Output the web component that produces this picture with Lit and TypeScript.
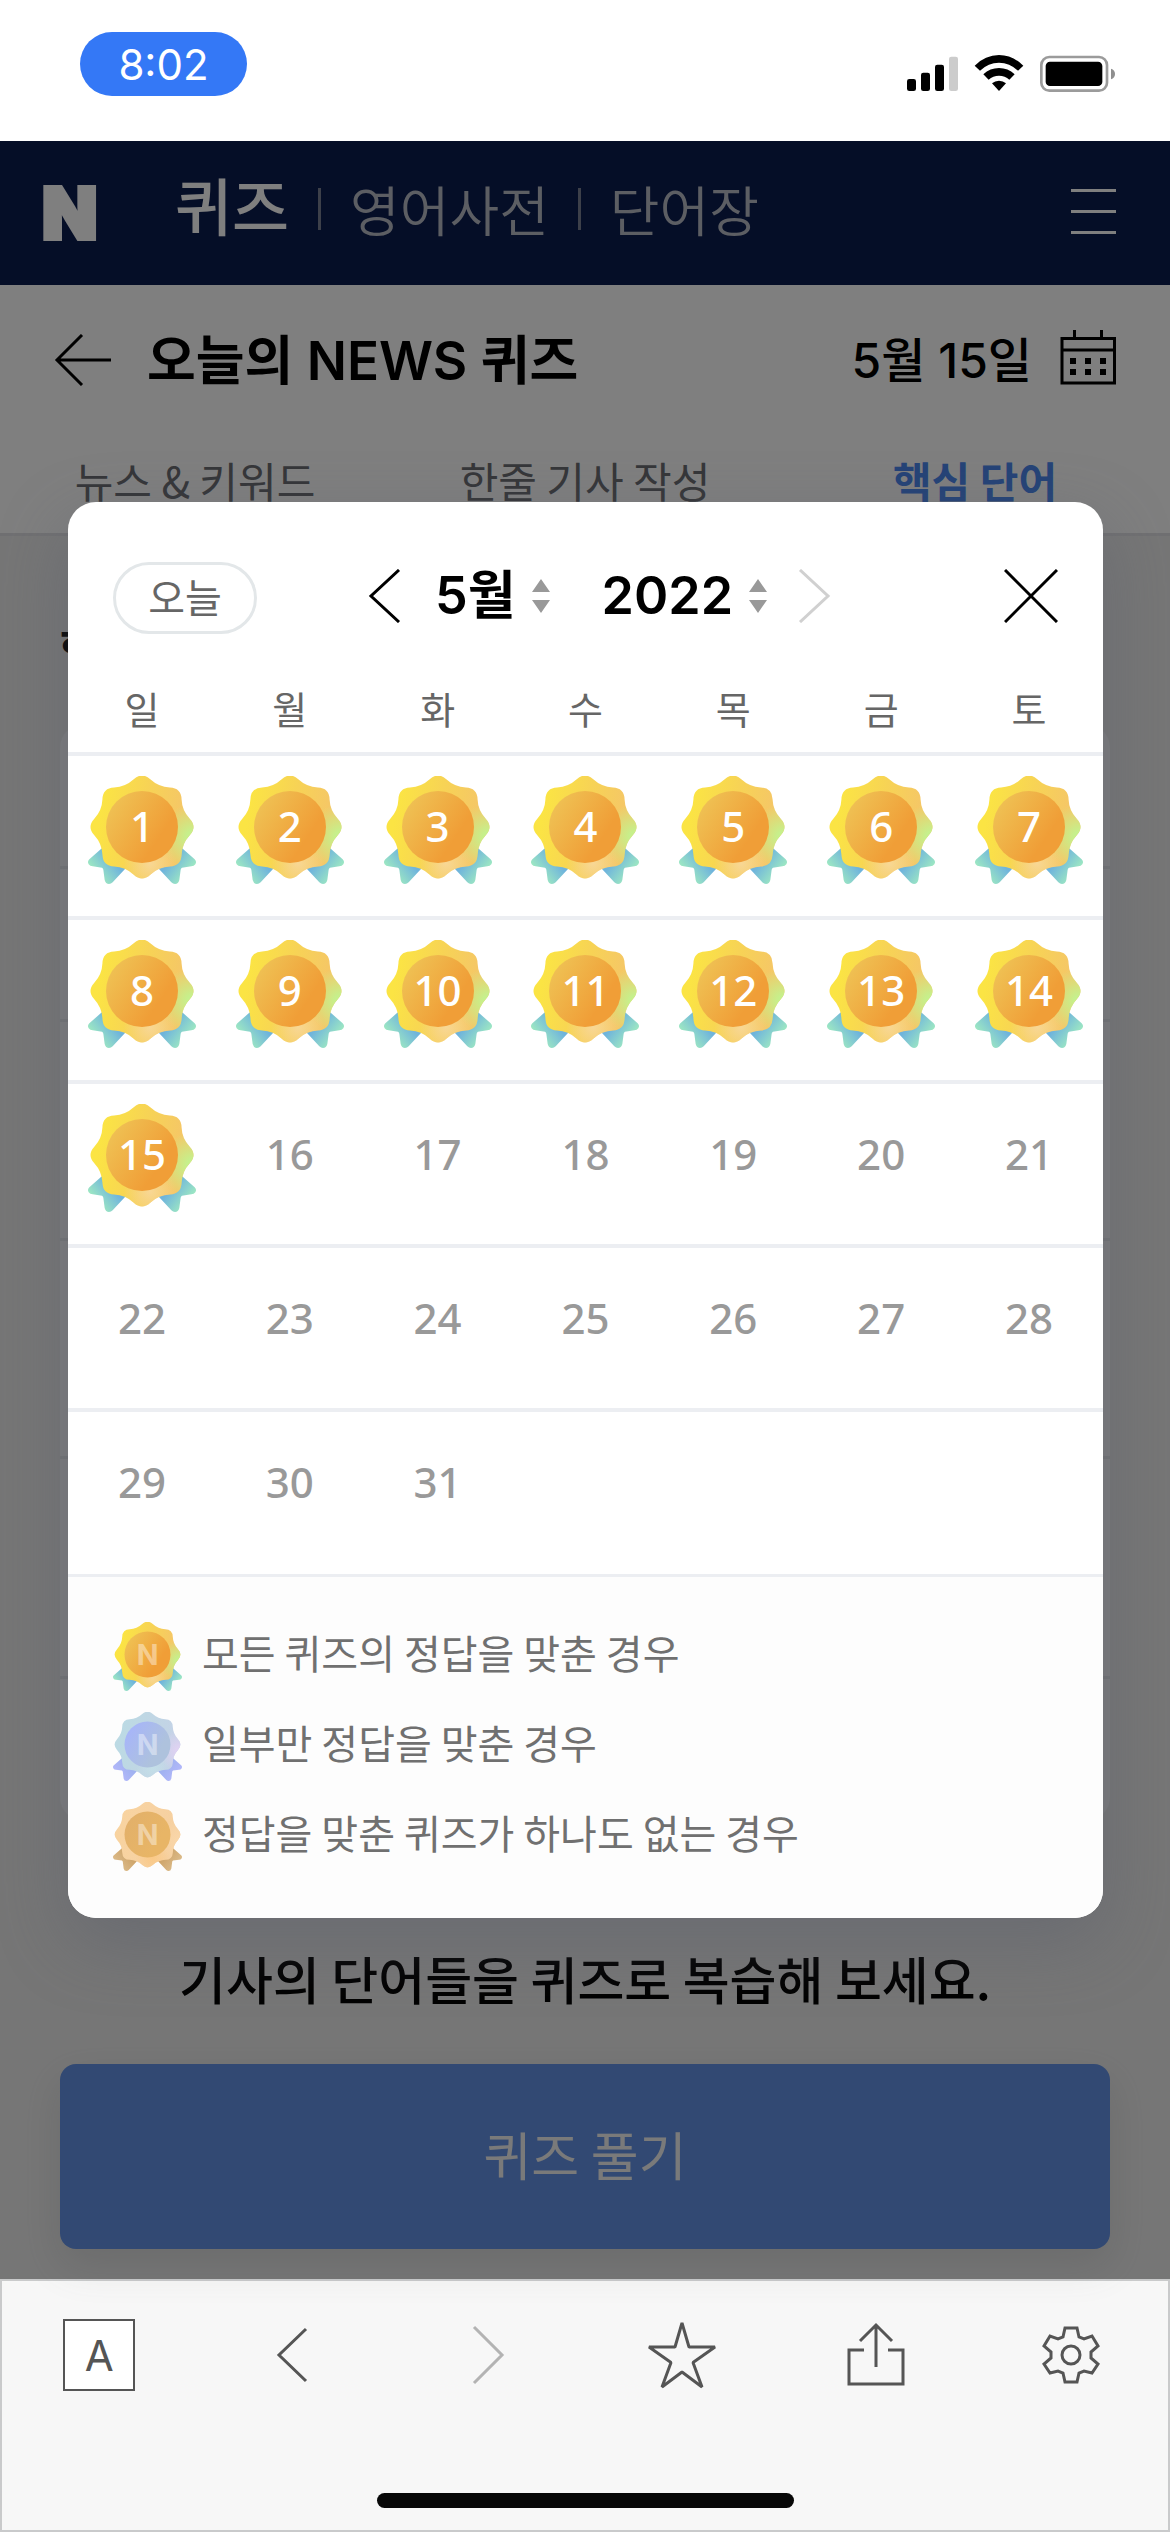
import { LitElement, html, css, svg, nothing } from "lit";
import { customElement, property, state } from "lit/decorators.js";
import { classMap } from "lit/directives/class-map.js";

type Grade = "gold" | "silver" | "bronze";

interface Palette {
  body: [string, string, string];
  glow: string;
  foot: string;
  disc: [string, string];
  ribbon: [string, string];
}

const PALETTES: Record<Grade, Palette> = {
  gold: {
    body: ["#fbe444", "#f7d355", "#f5c766"],
    glow: "#c6f08c",
    foot: "#f8d795",
    disc: ["#efc355", "#f09e37"],
    ribbon: ["#6fb4dc", "#a2edc0"],
  },
  silver: {
    body: ["#bcdae4", "#c0d6e4", "#c3d3e6"],
    glow: "#dfd2f2",
    foot: "#c4dfe8",
    disc: ["#a6b4fb", "#aec2dd"],
    ribbon: ["#a0b2f0", "#b4b8fb"],
  },
  bronze: {
    body: ["#f8d3a0", "#f7d2a2", "#f6d0a0"],
    glow: "#f9d6a8",
    foot: "#fac987",
    disc: ["#e2b06a", "#e8b566"],
    ribbon: ["#cfa66c", "#dcbc8c"],
  },
};

/* Eight-lobed rosette: quadratic curves between the midpoints of a star's edges. */
function rosette(cx: number, cy: number, tip: number, valley: number): string {
  const points = Array.from({ length: 16 }, (_, i) => {
    const radius = i % 2 === 0 ? tip : valley;
    const angle = (i * Math.PI) / 8;
    return [cx + radius * Math.sin(angle), cy - radius * Math.cos(angle)];
  });
  const mid = (a: number[], b: number[]) =>
    `${((a[0] + b[0]) / 2).toFixed(1)} ${((a[1] + b[1]) / 2).toFixed(1)}`;
  let d = `M${mid(points[15], points[0])}`;
  points.forEach((p, i) => {
    d += `Q${p[0].toFixed(1)} ${p[1].toFixed(1)} ${mid(p, points[(i + 1) % 16])}`;
  });
  return d + "Z";
}

const ROSETTE = rosette(162, 153, 166, 130);

@customElement("quiz-badge")
export class QuizBadge extends LitElement {
  @property() grade: Grade = "gold";
  @property() mark = "";

  static styles = css`
    :host {
      display: block;
    }
    .art {
      display: block;
      width: 100%;
      height: 100%;
    }
    .mark {
      font-family: Inter, "Liberation Sans", sans-serif;
      font-size: 134px;
      font-weight: 700;
      fill: #ffffff;
      fill-opacity: 0.42;
    }
  `;

  render() {
    const p = PALETTES[this.grade];
    return html`
      <svg class="art" viewBox="0 0 324 324" aria-hidden="true">
        <defs>
          <linearGradient id="body" x1="0" y1="0.3" x2="1" y2="0.5">
            <stop offset="0.1" stop-color=${p.body[0]} />
            <stop offset="0.5" stop-color=${p.body[1]} />
            <stop offset="0.85" stop-color=${p.body[2]} />
          </linearGradient>
          <radialGradient id="glow" gradientUnits="userSpaceOnUse" cx="312" cy="182" r="98">
            <stop offset="0.15" stop-color=${p.glow} />
            <stop offset="1" stop-color=${p.glow} stop-opacity="0" />
          </radialGradient>
          <radialGradient id="foot" gradientUnits="userSpaceOnUse" cx="186" cy="262" r="80">
            <stop offset="0" stop-color=${p.foot} />
            <stop offset="1" stop-color=${p.foot} stop-opacity="0" />
          </radialGradient>
          <linearGradient id="disc" x1="0" y1="0.2" x2="0.9" y2="0.8">
            <stop offset="0" stop-color=${p.disc[0]} />
            <stop offset="0.8" stop-color=${p.disc[1]} />
          </linearGradient>
          <linearGradient id="ribbon" gradientUnits="userSpaceOnUse" x1="84" y1="250" x2="20" y2="300">
            <stop offset="0.1" stop-color=${p.ribbon[0]} />
            <stop offset="1" stop-color=${p.ribbon[1]} />
          </linearGradient>
        </defs>
        <g fill="url(#ribbon)">
          <path
            d="M60 200L39 219L4 250Q-3 257 2 265Q6 271 14 271L42 275Q45 276 46 281L50 312Q53 324 63 324Q69 324 74 319L111 279L120 240Z"
          />
        </g>
        <g fill="url(#ribbon)" transform="translate(324 0) scale(-1 1)">
          <path
            d="M60 200L39 219L4 250Q-3 257 2 265Q6 271 14 271L42 275Q45 276 46 281L50 312Q53 324 63 324Q69 324 74 319L111 279L120 240Z"
          />
        </g>
        <path d=${ROSETTE} fill="url(#body)" />
        <path d=${ROSETTE} fill="url(#foot)" />
        <path d=${ROSETTE} fill="url(#glow)" />
        <circle cx="162" cy="153" r="108" fill="url(#disc)" />
        ${this.mark
          ? svg`<text class="mark" x="162" y="202" text-anchor="middle">${this.mark}</text>`
          : nothing}
      </svg>
    `;
  }
}

const WEEKDAYS = ["일", "월", "화", "수", "목", "금", "토"];
const TABS = ["뉴스 & 키워드", "한줄 기사 작성", "핵심 단어"];
const LEGEND: { grade: Grade; label: string }[] = [
  { grade: "gold", label: "모든 퀴즈의 정답을 맞춘 경우" },
  { grade: "silver", label: "일부만 정답을 맞춘 경우" },
  { grade: "bronze", label: "정답을 맞춘 퀴즈가 하나도 없는 경우" },
];
const LAST_SOLVED = 15;

const stepper = html`
  <svg class="stepper" viewBox="0 0 18 34" aria-hidden="true">
    <path d="M9 0L18 13H0Z M0 21H18L9 34Z" fill="#999999" />
  </svg>
`;

@customElement("app-root")
export class AppRoot extends LitElement {
  @state() private month = 5;
  @state() private year = 2022;

  static styles = css`
    :host {
      --kr: "Noto Sans CJK KR", sans-serif;
      --mixed: Inter, "Noto Sans CJK KR", sans-serif;
      display: flex;
      flex-direction: column;
      min-height: 100vh;
      box-sizing: border-box;
      background: #ffffff;
      font-family: var(--kr);
      color: #000000;
    }
    *,
    *::before {
      box-sizing: border-box;
    }
    svg {
      display: block;
      flex: none;
    }
    button,
    select {
      margin: 0;
      padding: 0;
      border: 0;
      background: none;
      color: inherit;
      font: inherit;
    }
    a {
      color: inherit;
      text-decoration: none;
    }
    h1,
    h2,
    p,
    ul {
      margin: 0;
      padding: 0;
      font-size: inherit;
      font-weight: inherit;
      list-style: none;
    }

    .status {
      display: flex;
      justify-content: space-between;
      align-items: flex-start;
      height: 141px;
      padding: 32px 54px 0 80px;
    }
    .clock {
      display: grid;
      place-items: center;
      width: 167px;
      height: 64px;
      border-radius: 32px;
      background: #3478f6;
      color: #ffffff;
      font-family: Inter, sans-serif;
      font-size: 42px;
    }
    .signals {
      width: 210px;
      height: 38px;
      margin-top: 22px;
    }

    .stage {
      position: relative;
      display: flex;
      flex-direction: column;
      flex: 1;
    }
    .gnb {
      display: flex;
      align-items: center;
      height: 144px;
      padding: 0 54px 0 42px;
      background: #0b1c4e;
      color: #ffffff;
    }
    .logo {
      width: 133px;
      font-family: Inter, sans-serif;
      font-size: 72px;
      font-weight: 900;
      line-height: 76px;
      -webkit-text-stroke: 4px #ffffff;
    }
    .gnb-links {
      display: flex;
      align-items: center;
      gap: 29px;
      flex: 1;
      padding-bottom: 8px;
      font-size: 54px;
      line-height: 72px;
      font-weight: 350;
      color: #b9bcc6;
    }
    .gnb-links .current {
      padding-bottom: 10px;
      font-size: 62px;
      font-weight: 500;
      color: #ffffff;
    }
    .bar {
      width: 3px;
      height: 42px;
      background: #7b8194;
    }
    .menu {
      padding-bottom: 4px;
    }
    .menu-icon {
      width: 45px;
      height: 45px;
    }

    .titlebar {
      display: flex;
      align-items: center;
      height: 150px;
      padding: 0 54px;
      background: #ffffff;
      font-family: var(--mixed);
    }
    .back-icon {
      width: 58px;
      height: 52px;
    }
    .title {
      flex: 1;
      padding: 0 0 6px 35px;
      font-size: 53px;
      font-weight: 600;
    }
    .date {
      display: flex;
      align-items: center;
      gap: 28px;
      padding-bottom: 6px;
      font-size: 48px;
      font-weight: 500;
    }
    .calendar-icon {
      width: 56px;
      height: 56px;
    }
    .tabs {
      display: grid;
      grid-template-columns: repeat(3, 1fr);
      height: 101px;
      border-bottom: 3px solid #e0e1e5;
      background: #ffffff;
      font-size: 42px;
      line-height: 60px;
      padding-top: 15px;
      color: #6a6c72;
      text-align: center;
    }
    .tabs .current {
      color: #4a86ee;
      font-weight: 700;
    }

    .lesson {
      display: flex;
      flex-direction: column;
      flex: 1;
      padding: 76px 60px 30px;
      background: #ededed;
    }
    .lesson-title {
      height: 112px;
      font-size: 46px;
      line-height: 68px;
      font-weight: 700;
    }
    .words {
      display: grid;
      grid-template-rows: 142fr 153fr 219fr 219fr 220fr 145fr;
      flex: 1;
      border-radius: 24px;
      background: #f8f8fa;
    }
    .words li + li {
      border-top: 3px solid #e6e8ec;
    }
    .hint {
      padding: 118px 0 47px;
      text-align: center;
      font-size: 51px;
      line-height: 78px;
      font-weight: 500;
    }
    .solve {
      height: 185px;
      padding-bottom: 6px;
      border-radius: 16px;
      background: #6493e6;
      box-shadow: 0 16px 40px rgba(100, 104, 115, 0.16);
      color: #f4f4f4;
      font-size: 52px;
      line-height: 76px;
    }

    .backdrop {
      position: absolute;
      inset: 0;
      display: grid;
      align-content: center;
      padding: 0 67px 0 68px;
      background: rgba(0, 0, 0, 0.5);
    }
    .dialog {
      overflow: hidden;
      border-radius: 28px;
      background: #ffffff;
    }
    .dialog-shadow {
      border-radius: 28px;
      box-shadow: 0 24px 68px rgba(88, 92, 108, 0.42);
    }
    .dialog-head {
      display: flex;
      align-items: center;
      padding: 58px 45px 32px;
    }
    .today {
      width: 144px;
      height: 72px;
      padding-bottom: 4px;
      border: 3px solid #e3e7e9;
      border-radius: 36px;
      color: #666666;
      font-size: 40px;
      line-height: 60px;
    }
    .period {
      display: flex;
      align-items: center;
      margin-left: 110px;
      padding-bottom: 4px;
    }
    .chevron {
      width: 34px;
      height: 54px;
    }
    .picker {
      position: relative;
      display: flex;
      align-items: center;
    }
    .picker select {
      appearance: none;
      field-sizing: content;
      height: 72px;
      font-family: var(--mixed);
      font-size: 52px;
      font-weight: 600;
      line-height: 72px;
    }
    .picker.month {
      margin: 0 52px 0 34px;
    }
    .picker.year {
      margin-right: 31px;
    }
    .picker.month select {
      min-width: 110px;
      padding-right: 34px;
    }
    .picker.year select {
      min-width: 164px;
      padding-right: 34px;
    }
    .stepper {
      position: absolute;
      right: 0;
      width: 18px;
      height: 34px;
      pointer-events: none;
    }
    .close {
      margin-left: auto;
      padding-bottom: 4px;
    }
    .close-icon {
      width: 54px;
      height: 54px;
    }

    .month-table {
      width: 100%;
      border-collapse: collapse;
      table-layout: fixed;
    }
    .month-table th {
      height: 86px;
      padding: 0 0 4px;
      color: #666666;
      font-size: 38px;
      font-weight: 400;
      line-height: 56px;
    }
    .month-table td {
      height: 164px;
      padding: 20px 0 0;
      border-top: 4px solid #eceef2;
      vertical-align: top;
    }
    .day {
      position: relative;
      display: grid;
      place-items: center;
      width: 108px;
      height: 108px;
      margin: 0 auto;
      padding-bottom: 10px;
      color: #999999;
      font-family: "Noto Sans", sans-serif;
      font-size: 42px;
      font-weight: 500;
    }
    .day.solved {
      color: #ffffff;
    }
    .day quiz-badge {
      position: absolute;
      inset: 0;
    }
    .day-number {
      position: relative;
    }

    .legend {
      display: flex;
      flex-direction: column;
      gap: 21px;
      padding: 45px 45px 47px;
      border-top: 3px solid #eceef2;
      background: #fdfdfd;
      color: #707070;
      font-size: 40px;
      line-height: 60px;
    }
    .legend-item {
      display: flex;
      align-items: center;
      gap: 20px;
      height: 69px;
    }
    .legend quiz-badge {
      width: 69px;
      height: 69px;
    }
    .legend-text {
      padding-bottom: 10px;
    }

    .toolbar {
      display: flex;
      flex-direction: column;
      justify-content: space-between;
      align-items: center;
      height: 253px;
      padding-bottom: 22px;
      border: 2px solid #c9cacb;
      background: #f7f7f7;
      color: #555555;
    }
    .tools {
      display: grid;
      grid-template-columns: repeat(6, 1fr);
      justify-items: center;
      align-items: center;
      width: 100%;
      padding-top: 38px;
    }
    .tool {
      display: grid;
      place-items: center;
      width: 72px;
      height: 72px;
    }
    .tool.home {
      border: 2px solid #555555;
      background: #ffffff;
      font-family: Inter, sans-serif;
      font-size: 42px;
    }
    .tool svg {
      width: 72px;
      height: 72px;
    }
    .tool.off {
      color: #b3b3b3;
    }
    .handle {
      width: 417px;
      height: 15px;
      border-radius: 8px;
      background: #080808;
    }
  `;

  private setMonth(e: Event) {
    this.month = Number((e.target as HTMLSelectElement).value);
  }

  private setYear(e: Event) {
    this.year = Number((e.target as HTMLSelectElement).value);
  }

  private weeks(): (number | null)[][] {
    const offset = new Date(this.year, this.month - 1, 1).getDay();
    const count = new Date(this.year, this.month, 0).getDate();
    const rows = Math.ceil((offset + count) / 7);
    return Array.from({ length: rows }, (_, r) =>
      Array.from({ length: 7 }, (_, c) => {
        const day = r * 7 + c - offset + 1;
        return day >= 1 && day <= count ? day : null;
      }),
    );
  }

  private renderDay(day: number | null) {
    if (day === null) return html`<td></td>`;
    const solved = this.year === 2022 && this.month === 5 && day <= LAST_SOLVED;
    return html`
      <td>
        <button class=${classMap({ day: true, solved })}>
          ${solved ? html`<quiz-badge grade="gold"></quiz-badge>` : nothing}
          <span class="day-number">${day}</span>
        </button>
      </td>
    `;
  }

  private renderStatus() {
    return html`
      <div class="status">
        <span class="clock">8:02</span>
        <svg class="signals" viewBox="48 42 630 114" aria-hidden="true">
          <rect x="51" y="117" width="27" height="36" rx="7" />
          <rect x="93" y="98" width="27" height="55" rx="7" />
          <rect x="135" y="74" width="27" height="79" rx="7" />
          <rect x="177" y="50" width="27" height="103" rx="7" fill="#cccccc" />
          <path d="M254 77Q286 45 327 45T400 77L384 92Q359 68 327 68T270 92Z" />
          <path d="M280 103Q300 84 327 84T374 103L358 119Q345 107 327 107T296 119Z" />
          <path d="M306 130Q315 122 327 122T348 130L327 153Z" />
          <rect x="454" y="51" width="197" height="101" rx="24" fill="none" stroke="#9b9b9b" stroke-width="8" />
          <rect x="467" y="65" width="170" height="73" rx="13" />
          <path d="M663 86Q675 90 675 102T663 118Z" fill="#8f8f8f" />
        </svg>
      </div>
    `;
  }

  private renderPage() {
    return html`
      <header class="gnb">
        <a class="logo" href="#">N</a>
        <nav class="gnb-links">
          <a class="current" href="#quiz">퀴즈</a>
          <span class="bar"></span>
          <a href="#dictionary">영어사전</a>
          <span class="bar"></span>
          <a href="#wordbook">단어장</a>
        </nav>
        <button class="menu" aria-label="메뉴">
          <svg class="menu-icon" viewBox="0 0 45 45" fill="#ffffff">
            <rect width="45" height="3" />
            <rect y="21" width="45" height="3" />
            <rect y="42" width="45" height="3" />
          </svg>
        </button>
      </header>

      <div class="titlebar">
        <button aria-label="뒤로">
          <svg class="back-icon" viewBox="0 0 58 52" fill="none" stroke="#000000" stroke-width="3">
            <path d="M28 1L3 26L28 51M3 26H57" />
          </svg>
        </button>
        <h1 class="title">오늘의 NEWS 퀴즈</h1>
        <button class="date">
          5월 15일
          <svg class="calendar-icon" viewBox="0 0 56 56" aria-hidden="true">
            <path
              d="M2 9.500H54.500V54H2ZM2 21H54.500M14.500 1V9M41.500 1V9"
              fill="none"
              stroke="#000000"
              stroke-width="3"
            />
            <path
              d="M10 29h6v6h-6zM25 29h6v6h-6zM40 29h6v6h-6zM10 40h6v6h-6zM25 40h6v6h-6zM40 40h6v6h-6z"
            />
          </svg>
        </button>
      </div>

      <nav class="tabs">
        ${TABS.map(
          (tab, i) => html`<a class=${classMap({ current: i === 2 })} href="#tab-${i}">${tab}</a>`,
        )}
      </nav>

      <section class="lesson">
        <h2 class="lesson-title">핵심</h2>
        <ul class="words">
          ${Array.from({ length: 6 }, () => html`<li></li>`)}
        </ul>
        <p class="hint">기사의 단어들을 퀴즈로 복습해 보세요.</p>
        <button class="solve">퀴즈 풀기</button>
      </section>
    `;
  }

  private renderDialog() {
    return html`
      <div class="backdrop">
        <div class="dialog-shadow">
          <div class="dialog" role="dialog" aria-label="퀴즈 달력">
            <div class="dialog-head">
              <button class="today">오늘</button>
              <div class="period">
                <button aria-label="이전 달">
                  <svg class="chevron" viewBox="0 0 34 54" fill="none" stroke="#000000" stroke-width="3">
                    <path d="M32 1L4 27L32 53" />
                  </svg>
                </button>
                <label class="picker month">
                  <select aria-label="월" @change=${this.setMonth}>
                    ${Array.from(
                      { length: 12 },
                      (_, i) => html`<option value=${i + 1} ?selected=${i + 1 === this.month}>${i + 1}월</option>`,
                    )}
                  </select>
                  ${stepper}
                </label>
                <label class="picker year">
                  <select aria-label="연도" @change=${this.setYear}>
                    ${[2020, 2021, 2022].map(
                      (y) => html`<option value=${y} ?selected=${y === this.year}>${y}</option>`,
                    )}
                  </select>
                  ${stepper}
                </label>
                <button aria-label="다음 달" disabled>
                  <svg class="chevron" viewBox="0 0 34 54" fill="none" stroke="#d0d0d0" stroke-width="3">
                    <path d="M2 1L30 27L2 53" />
                  </svg>
                </button>
              </div>
              <button class="close" aria-label="닫기">
                <svg class="close-icon" viewBox="0 0 54 54" fill="none" stroke="#000000" stroke-width="3">
                  <path d="M1 1L53 53M53 1L1 53" />
                </svg>
              </button>
            </div>

            <table class="month-table">
              <thead>
                <tr>
                  ${WEEKDAYS.map((d) => html`<th scope="col">${d}</th>`)}
                </tr>
              </thead>
              <tbody>
                ${this.weeks().map((week) => html`<tr>${week.map((d) => this.renderDay(d))}</tr>`)}
              </tbody>
            </table>

            <ul class="legend">
              ${LEGEND.map(
                (item) => html`
                  <li class="legend-item">
                    <quiz-badge grade=${item.grade} mark="N"></quiz-badge>
                    <span class="legend-text">${item.label}</span>
                  </li>
                `,
              )}
            </ul>
          </div>
        </div>
      </div>
    `;
  }

  private renderToolbar() {
    return html`
      <footer class="toolbar">
        <div class="tools">
          <button class="tool home" aria-label="앱 홈">A</button>
          <button class="tool" aria-label="이전">
            <svg viewBox="0 0 72 72" fill="none" stroke="currentColor" stroke-width="3">
              <path d="M49 10L22 36L49 62" />
            </svg>
          </button>
          <button class="tool off" aria-label="다음" disabled>
            <svg viewBox="0 0 72 72" fill="none" stroke="currentColor" stroke-width="3">
              <path d="M22 8L50 36L22 64" />
            </svg>
          </button>
          <button class="tool" aria-label="즐겨찾기">
            <svg viewBox="0 0 72 72" fill="none" stroke="currentColor" stroke-width="3" stroke-linejoin="bevel">
              <path d="M36 4L43 28H69L47 43.500L56 68L36 53L16 68L25 43.500L3 28H29Z" />
            </svg>
          </button>
          <button class="tool" aria-label="공유">
            <svg viewBox="0 0 72 72" fill="none" stroke="currentColor" stroke-width="3">
              <path d="M24 31H9V65H63V31H48M36 48V7M20 22L36 6L52 22" />
            </svg>
          </button>
          <button class="tool" aria-label="설정">
            <svg viewBox="0 0 72 72" fill="none" stroke="currentColor" stroke-width="3">
              <path
                d="M30 9H42L44 18L49 20L57 17L63 27L56 33V39L63 45L57 54L49 52L44 54L42 63H30L28 54L23 52L15 54L9 45L16 39V33L9 27L15 17L23 20L28 18Z"
              />
              <circle cx="36" cy="36" r="9" />
            </svg>
          </button>
        </div>
        <div class="handle"></div>
      </footer>
    `;
  }

  render() {
    return html`
      ${this.renderStatus()}
      <main class="stage">${this.renderPage()} ${this.renderDialog()}</main>
      ${this.renderToolbar()}
    `;
  }
}
